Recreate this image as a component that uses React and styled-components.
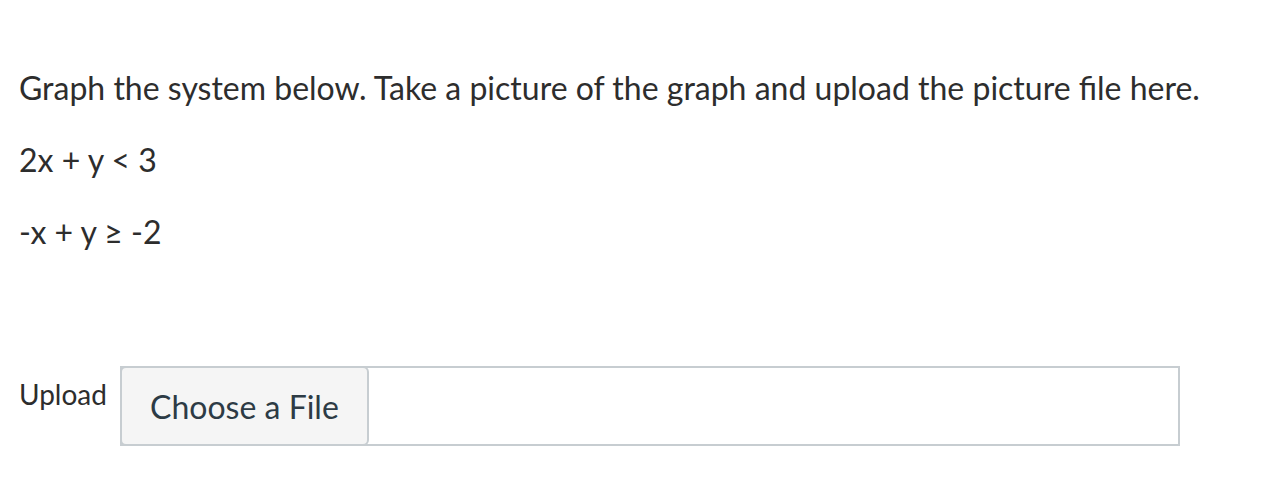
import styled, { createGlobalStyle } from 'styled-components';

const GlobalStyle = createGlobalStyle`
  body {
    margin: 0;
    background: #fff;
    font-family: Lato, "Liberation Sans", sans-serif;
    color: #2d2d2d;
  }
`;

const Page = styled.div`
  padding: 64px 19px 0;
`;

const Question = styled.div`
  display: flex;
  flex-direction: column;
  gap: 24px;
`;

const Line = styled.p`
  margin: 0;
  font-size: 32px;
  line-height: 48px;
`;

const UploadRow = styled.div`
  display: flex;
  align-items: flex-start;
  margin-top: 110px;
  gap: 13px;
`;

const Label = styled.span`
  font-size: 28px;
  line-height: 43px;
  padding-top: 7px;
`;

const FileBox = styled.div`
  display: flex;
  width: 1060px;
  height: 80px;
  border: 2px solid #c7cdd1;
  box-sizing: border-box;
`;

const ChooseButton = styled.button`
  position: relative;
  margin: -2px 0 -2px -2px;
  width: 249px;
  height: 80px;
  background: #f5f5f5;
  border: 2px solid #c7cdd1;
  border-radius: 6px;
  font-family: Lato, "Liberation Sans", sans-serif;
  font-size: 32px;
  color: #2d3b45;
  padding: 0;
`;

export default function App() {
  return (
    <Page>
      <GlobalStyle />
      <Question>
        <Line>Graph the system below. Take a picture of the graph and upload the picture file here.</Line>
        <Line>2x + y &lt; 3</Line>
        <Line>-x + y ≥ -2</Line>
      </Question>
      <UploadRow>
        <Label>Upload</Label>
        <FileBox>
          <ChooseButton>Choose a File</ChooseButton>
        </FileBox>
      </UploadRow>
    </Page>
  );
}
